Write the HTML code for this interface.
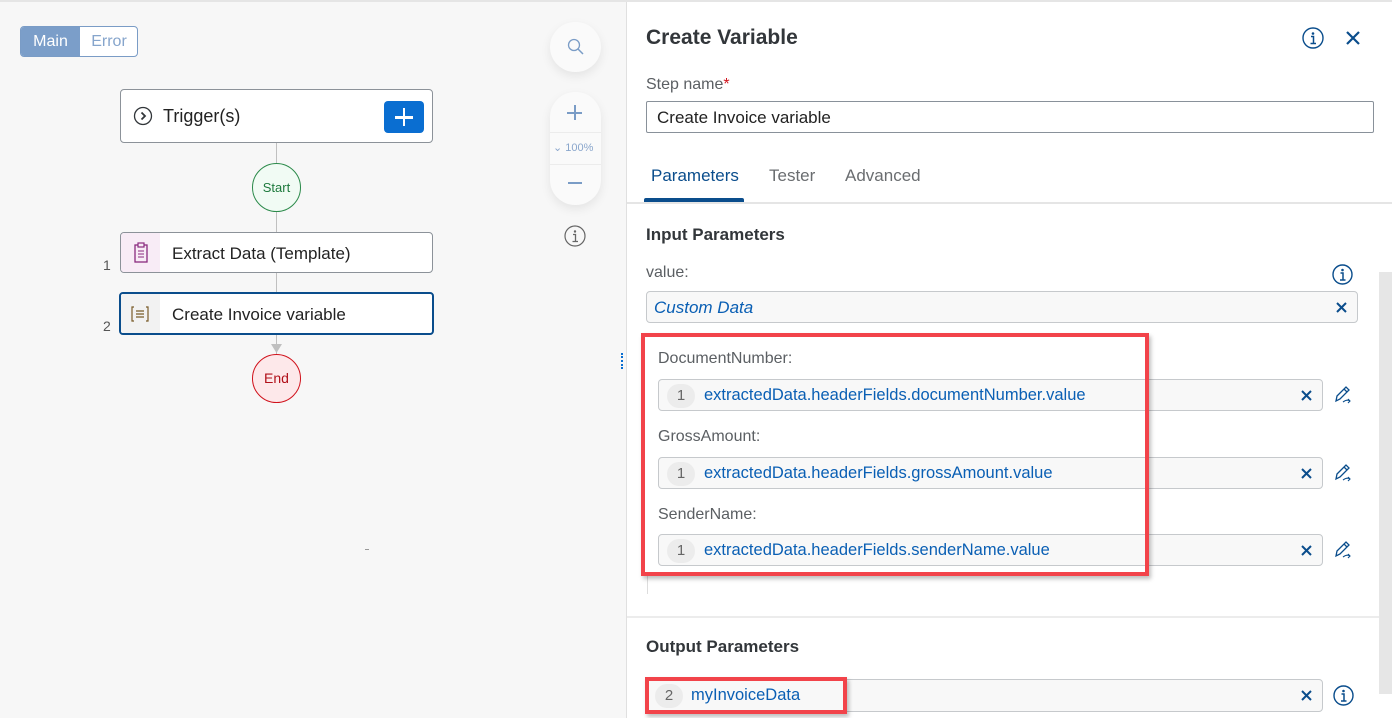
<!DOCTYPE html>
<html><head><meta charset="utf-8"><style>
*{box-sizing:border-box;margin:0;padding:0}
body{width:1392px;height:718px;overflow:hidden;background:#f7f7f7;font-family:"Liberation Sans",sans-serif;position:relative;color:#32363a}
.a{position:absolute}
.topline{left:0;top:0;width:1392px;height:2px;background:#e5e5e5}
.seg{left:20px;top:26px;width:118px;height:31px;border:1px solid #7a9cc6;border-radius:4px;overflow:hidden;background:#fff}
.seg .m{position:absolute;left:0;top:0;width:59px;height:29px;background:#7b9ec9;color:#fff;font-size:16px;line-height:29px;text-align:center}
.seg .e{position:absolute;left:59px;top:0;width:58px;height:29px;color:#86a5cc;font-size:16px;line-height:29px;text-align:center}
.node{background:#fff;border:1px solid #8c9299;border-radius:4px}
.vline{width:1px;background:#c0c0c0}
.circ{border-radius:50%;text-align:center;font-size:13px}
.ctl{background:#fafafa;box-shadow:0 4px 10px rgba(0,0,0,.08);border-radius:25px}
.panel{left:626px;top:2px;width:766px;height:716px;background:#fff;border-left:1px solid #e0e0e0}
.lbl{font-size:16px;color:#5b5f63}
.inp{border:1px solid #c6c9cc;border-radius:4px;background:#f8f8f8}
.blue{color:#0a5fb4}
.num{display:inline-block;width:28px;height:24px;border-radius:12px;background:#ececec;color:#666;font-size:15px;line-height:24px;text-align:center}
.red{border:4px solid #f2434a;box-shadow:2px 3px 4px rgba(0,0,0,.25)}
</style></head><body>
<div class="a topline"></div>
<div class="a seg"><div class="m">Main</div><div class="e">Error</div></div>

<div class="a vline" style="left:276px;top:142px;height:230px"></div>
<div class="a node" style="left:120px;top:89px;width:313px;height:54px">
 <svg class="a" style="left:12px;top:16px" width="20" height="20"><circle cx="10" cy="10" r="8.5" fill="none" stroke="#32363a" stroke-width="1.3"/><path d="M8.5 6.5 L12 10 L8.5 13.5" fill="none" stroke="#32363a" stroke-width="1.8"/></svg>
 <div class="a" style="left:42px;top:16px;font-size:18px;color:#222">Trigger(s)</div>
 <div class="a" style="left:263px;top:11px;width:40px;height:32px;background:#0a6ed1;border-radius:4px">
  <div class="a" style="left:11px;top:15px;width:18px;height:2.5px;background:#fff"></div><div class="a" style="left:18.7px;top:7px;width:2.5px;height:18px;background:#fff"></div></div>
</div>
<div class="a circ" style="left:252px;top:163px;width:49px;height:49px;border:1px solid #2b8a4a;background:#f1fbf4;color:#1e7a3d;line-height:47px">Start</div>
<div class="a" style="left:103px;top:257px;font-size:14px;color:#555">1</div>
<div class="a node" style="left:120px;top:232px;width:313px;height:41px;overflow:hidden">
 <div class="a" style="left:0;top:0;width:39px;height:41px;background:#f8ecf6"></div>
 <svg class="a" style="left:12px;top:9px" width="16" height="22"><rect x="2" y="3" width="12" height="17" fill="none" stroke="#8a2a7f" stroke-width="1.3"/><rect x="5" y="1" width="6" height="4" fill="#f8ecf6" stroke="#8a2a7f" stroke-width="1.2"/><path d="M5 9h6M5 12h6M5 15h6" stroke="#8a2a7f" stroke-width="1"/></svg>
 <div class="a" style="left:51px;top:11px;font-size:17px;color:#222">Extract Data (Template)</div>
</div>
<div class="a" style="left:103px;top:318px;font-size:14px;color:#555">2</div>
<div class="a node" style="left:119px;top:292px;width:315px;height:43px;border:2px solid #0a4d8c;overflow:hidden">
 <div class="a" style="left:0;top:0;width:39px;height:41px;background:#f2f2f2"></div>
 <svg class="a" style="left:9px;top:11px" width="20" height="18"><path d="M4 2H2V16H4M16 2H18V16H16M6 6H14M6 9H14M6 12H14" fill="none" stroke="#7a5b2a" stroke-width="1.2"/></svg>
 <div class="a" style="left:51px;top:11px;font-size:17px;color:#222">Create Invoice variable</div>
</div>
<svg class="a" style="left:271px;top:344px" width="11" height="10"><path d="M0 0 L11 0 L5.5 9Z" fill="#c0c0c0"/></svg>
<div class="a circ" style="left:252px;top:354px;width:49px;height:49px;border:1px solid #d0121c;background:#fde8ea;color:#b1101a;line-height:47px;font-size:14px">End</div>
<div class="a" style="left:365px;top:549px;width:4px;height:1px;background:#999"></div>

<div class="a ctl" style="left:550px;top:22px;width:51px;height:50px"><svg class="a" style="left:17px;top:16px" width="18" height="18"><circle cx="7" cy="7" r="5.5" fill="none" stroke="#7a9cc6" stroke-width="1.3"/><path d="M11 11 L16 16" stroke="#7a9cc6" stroke-width="1.5"/></svg></div>
<div class="a ctl" style="left:550px;top:92px;width:51px;height:113px">
 <div class="a" style="left:17px;top:20px;width:15px;height:1.5px;background:#7a9cc6"></div><div class="a" style="left:24px;top:13px;width:1.5px;height:15px;background:#7a9cc6"></div>
 <div class="a" style="left:0;top:40px;width:51px;height:1px;background:#ececec"></div>
 <div class="a" style="left:3px;top:49px;font-size:11px;color:#8aa6cc">&#8964; 100%</div>
 <div class="a" style="left:0;top:72px;width:51px;height:1px;background:#ececec"></div>
 <div class="a" style="left:18px;top:90px;width:14px;height:2px;background:#7a9cc6"></div>
</div>
<svg class="a" style="left:564px;top:225px" width="22" height="22"><circle cx="11" cy="11" r="10" fill="none" stroke="#666" stroke-width="1.2"/><circle cx="11" cy="6.5" r="1.2" fill="#666"/><path d="M9 9.5h2.5v7M8.5 16.5h5.5" fill="none" stroke="#666" stroke-width="1.3"/></svg>
<div class="a" style="left:621px;top:353px;width:2px;height:16px;border-left:2px dotted #0a6ed1"></div>

<div class="a panel">
 <div class="a" style="left:19px;top:24px;font-size:21px;font-weight:bold;color:#32363a">Create Variable</div>
 <svg class="a" style="left:675px;top:25px" width="22" height="22"><circle cx="11" cy="11" r="10" fill="none" stroke="#0a4d8c" stroke-width="1.4"/><circle cx="11" cy="6.5" r="1.3" fill="#0a4d8c"/><path d="M9 9.5h2.5v7M8.5 16.5h5.5" fill="none" stroke="#0a4d8c" stroke-width="1.5"/></svg>
 <svg class="a" style="left:718px;top:28px" width="16" height="16"><path d="M2 2L14 14M14 2L2 14" stroke="#0a4d8c" stroke-width="2.2"/></svg>
 <div class="a lbl" style="left:19px;top:74px">Step name<span style="color:#d0121c">*</span></div>
 <div class="a" style="left:19px;top:99px;width:728px;height:32px;border:1px solid #89919a;border-radius:2px;background:#fff"><div class="a" style="left:10px;top:6px;font-size:17px;color:#222">Create Invoice variable</div></div>
 <div class="a" style="left:24px;top:164px;font-size:17px;color:#0a4d8c">Parameters</div>
 <div class="a" style="left:142px;top:164px;font-size:17px;color:#6a6d70">Tester</div>
 <div class="a" style="left:218px;top:164px;font-size:17px;color:#6a6d70">Advanced</div>
 <div class="a" style="left:17px;top:196px;width:100px;height:4px;background:#0a4d8c;border-radius:2px 2px 0 0"></div>
 <div class="a" style="left:0;top:200px;width:766px;height:2px;background:#e5e5e5"></div>
 <div class="a" style="left:19px;top:223px;font-size:17px;font-weight:bold;color:#32363a">Input Parameters</div>
 <div class="a lbl" style="left:19px;top:262px">value:</div>
 <svg class="a" style="left:705px;top:262px" width="21" height="21"><circle cx="10.5" cy="10.5" r="9.5" fill="none" stroke="#0a4d8c" stroke-width="1.4"/><circle cx="10.5" cy="6" r="1.3" fill="#0a4d8c"/><path d="M8.5 9h2.5v7M8 16h5.5" fill="none" stroke="#0a4d8c" stroke-width="1.5"/></svg>
 <div class="a inp" style="left:19px;top:289px;width:712px;height:32px"><div class="a blue" style="left:7px;top:6px;font-size:17px;font-style:italic">Custom Data</div><svg class="a" style="left:689px;top:10px" width="11" height="11"><path d="M1 1L10 10M10 1L1 10" stroke="#0a4d8c" stroke-width="2"/></svg></div>

 <div class="a inp" style="left:31px;top:377px;width:665px;height:32px"><span class="num a" style="left:8px;top:4px">1</span><div class="a blue" style="left:45px;top:6px;font-size:16.5px">extractedData.headerFields.documentNumber.value</div><svg class="a" style="left:642px;top:10px" width="11" height="11"><path d="M1 1L10 10M10 1L1 10" stroke="#0a4d8c" stroke-width="2"/></svg></div>
 <div class="a inp" style="left:31px;top:455px;width:665px;height:32px"><span class="num a" style="left:8px;top:4px">1</span><div class="a blue" style="left:45px;top:6px;font-size:16.5px">extractedData.headerFields.grossAmount.value</div><svg class="a" style="left:642px;top:10px" width="11" height="11"><path d="M1 1L10 10M10 1L1 10" stroke="#0a4d8c" stroke-width="2"/></svg></div>
 <div class="a inp" style="left:31px;top:532px;width:665px;height:32px"><span class="num a" style="left:8px;top:4px">1</span><div class="a blue" style="left:45px;top:6px;font-size:16.5px">extractedData.headerFields.senderName.value</div><svg class="a" style="left:642px;top:10px" width="11" height="11"><path d="M1 1L10 10M10 1L1 10" stroke="#0a4d8c" stroke-width="2"/></svg></div>
 <div class="a lbl" style="left:31px;top:348px">DocumentNumber:</div>
 <div class="a lbl" style="left:31px;top:426px">GrossAmount:</div>
 <div class="a lbl" style="left:31px;top:504px">SenderName:</div>
 <svg class="a" style="left:706px;top:383px" width="20" height="20"><path d="M3 16 L4 11 L13 2 L16 5 L7 14 Z M11 4 L14 7" fill="none" stroke="#0a4d8c" stroke-width="1.3"/><path d="M10 17 Q14 14 17 16 M15 14l2 2-2 2" fill="none" stroke="#0a4d8c" stroke-width="1.1"/></svg>
 <svg class="a" style="left:706px;top:461px" width="20" height="20"><path d="M3 16 L4 11 L13 2 L16 5 L7 14 Z M11 4 L14 7" fill="none" stroke="#0a4d8c" stroke-width="1.3"/><path d="M10 17 Q14 14 17 16 M15 14l2 2-2 2" fill="none" stroke="#0a4d8c" stroke-width="1.1"/></svg>
 <svg class="a" style="left:706px;top:538px" width="20" height="20"><path d="M3 16 L4 11 L13 2 L16 5 L7 14 Z M11 4 L14 7" fill="none" stroke="#0a4d8c" stroke-width="1.3"/><path d="M10 17 Q14 14 17 16 M15 14l2 2-2 2" fill="none" stroke="#0a4d8c" stroke-width="1.1"/></svg>
 <div class="a" style="left:20px;top:572px;width:1px;height:20px;background:#ddd"></div>
 <div class="a red" style="left:14px;top:331px;width:508px;height:243px"></div>

 <div class="a" style="left:0;top:614px;width:752px;height:2px;background:#ececec"></div>
 <div class="a" style="left:19px;top:635px;font-size:17px;font-weight:bold;color:#32363a">Output Parameters</div>
 <div class="a inp" style="left:19px;top:677px;width:677px;height:33px"><span class="num a" style="left:8px;top:4px">2</span><div class="a blue" style="left:44px;top:6px;font-size:16.5px">myInvoiceData</div><svg class="a" style="left:654px;top:10px" width="11" height="11"><path d="M1 1L10 10M10 1L1 10" stroke="#0a4d8c" stroke-width="2"/></svg></div>
 <div class="a red" style="left:18px;top:675px;width:202px;height:37px"></div>
 <svg class="a" style="left:706px;top:683px" width="21" height="21"><circle cx="10.5" cy="10.5" r="9.5" fill="none" stroke="#0a4d8c" stroke-width="1.4"/><circle cx="10.5" cy="6" r="1.3" fill="#0a4d8c"/><path d="M8.5 9h2.5v7M8 16h5.5" fill="none" stroke="#0a4d8c" stroke-width="1.5"/></svg>
 <div class="a" style="left:752px;top:270px;width:14px;height:422px;background:#e6e6e6"></div>
</div>
</body></html>
